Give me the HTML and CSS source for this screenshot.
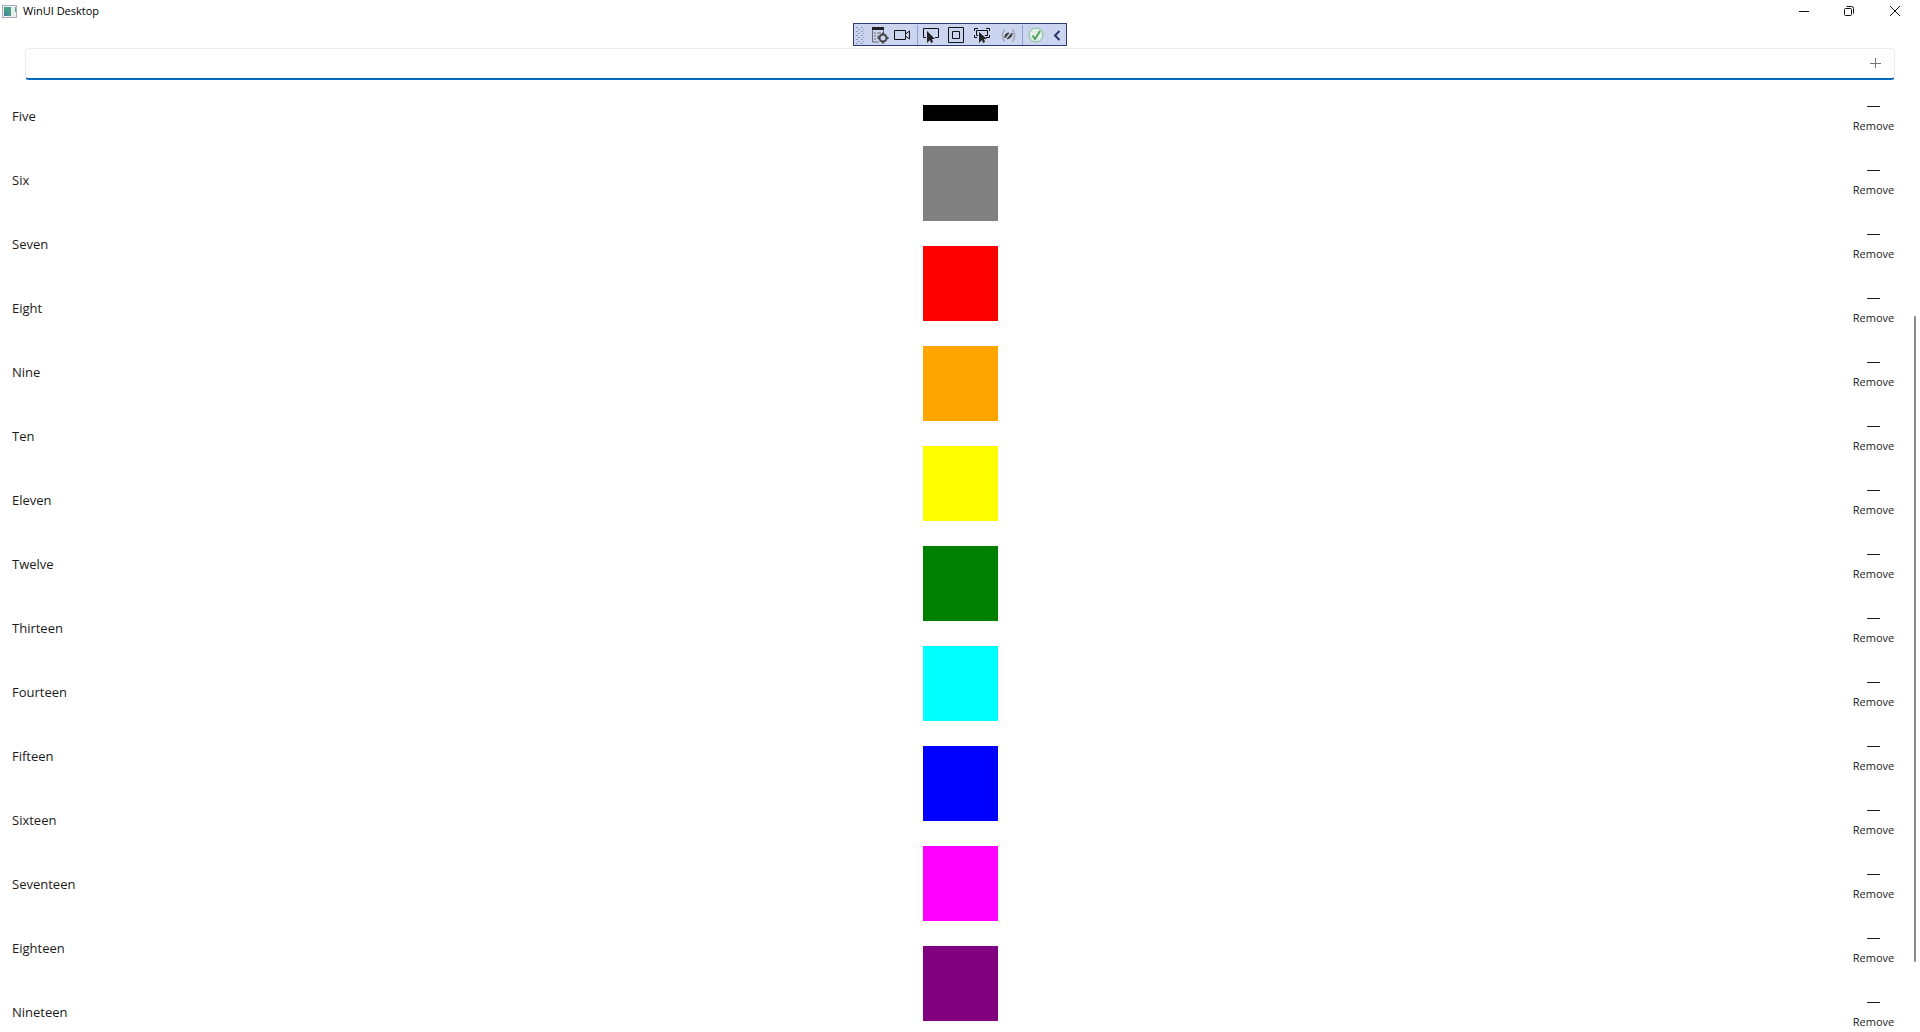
FILE: index.html
```html
<!DOCTYPE html>
<html lang="en">
<head>
<meta charset="utf-8">
<title>WinUI Desktop</title>
<link rel="stylesheet" href="styles.css">
</head>
<body>
<header class="titlebar">
  <svg class="app-icon" width="16" height="13" viewBox="0 0 16 13"><rect x=".5" y=".5" width="14" height="12" fill="#eef1f4" stroke="#a9abb6"/><rect x="2" y="2" width="7" height="9" fill="#4c9a88"/><path d="M2 11V6l4 5z" fill="#4a82a6"/><rect x="9" y="2" width="4" height="9" fill="#e4efec"/><path d="M13 2h1v5h-1z" fill="#5ba07c"/></svg>
  <h1 class="title">WinUI Desktop</h1>
  <div class="window-buttons">
    <button class="window-button" aria-label="Minimize"><svg width="12" height="12" viewBox="0 0 12 12"><path d="M2 6.5h10"/></svg></button>
    <button class="window-button" aria-label="Restore"><svg width="12" height="12" viewBox="0 0 12 12"><rect x="1.500" y="3.500" width="7" height="7" rx="1"/><path d="M3.500 1.500h5a2 2 0 0 1 2 2v5"/></svg></button>
    <button class="window-button" aria-label="Close"><svg width="12" height="12" viewBox="0 0 12 12"><path d="M1 1l10 10M11 1L1 11"/></svg></button>
  </div>
</header>

<div class="debug-bar" role="toolbar" aria-label="Debug tools">
  <svg class="grip" width="8" height="18" viewBox="0 0 8 18"><path d="M0 1.500h8M0 5.500h8M0 9.500h8M0 13.500h8M0 17.500h8" stroke-dasharray="2 3"/><path d="M2 3.500h6M2 7.500h6M2 11.500h6M2 15.500h6" stroke-dasharray="2 3"/></svg>
  <button class="tool tool-tree" aria-label="Live visual tree"><svg width="18" height="18" viewBox="0 0 18 18"><path d="M1 1h12v3H1z" fill="#222" stroke="none"/><path d="M1.500 4v12H8M12.500 4v3M3 7h2M6 7h4M3 10h2M6 10h2M3 13h2" stroke="#666"/><circle cx="12" cy="12" r="3.500" stroke="#444" stroke-width="2"/><path d="M12 6.500v2M12 15.500v2M6.500 12h2M15.500 12h2" stroke="#444" stroke-width="2"/></svg></button>
  <button class="tool tool-camera" aria-label="Camera"><svg width="18" height="18" viewBox="0 0 18 18"><path d="M1.500 4.500h11v9h-11zM12.500 8l4-3v8l-4-3"/></svg></button>
  <span class="divider"></span>
  <button class="tool tool-select" aria-label="Select element"><svg width="18" height="18" viewBox="0 0 18 18"><path d="M4 11.500H1.500v-9h15v9H13"/><path class="solid" d="M5 5v12l3-3 1 3 2-1-1-3h3z"/></svg></button>
  <button class="tool tool-adorners" aria-label="Layout adorners"><svg width="18" height="18" viewBox="0 0 18 18"><path d="M1.500 1.500h15v15h-15zM5.500 5.500h7v7h-7z"/></svg></button>
  <button class="tool tool-focus" aria-label="Track focus"><svg width="18" height="18" viewBox="0 0 18 18"><path d="M1.500 5V2.500H5M13 2.500h3.500V5M1.500 9v2.500H4M13 11.500h3.500V9M5 9.500H3.500v-5h11v5H12"/><path class="solid" d="M6 6v11l3-3 1 3 2-1-1-3h3z"/></svg></button>
  <button class="tool tool-binding" aria-label="Binding failures"><svg width="18" height="18" viewBox="0 0 18 18"><path d="M6 4C3 4 5 8 3 9.500 5 11 3 15 6 15M13 4c3 0 1 4 3 5.500-2 1.500 0 5.500-3 5.500" stroke="#888"/><path d="M6 10c0-2 2-3 4-3l-4 5zM13 8c0 3-2 4-5 5l5-6z" fill="#333" stroke="#444"/></svg></button>
  <span class="divider"></span>
  <button class="tool tool-reload" aria-label="Hot reload"><svg width="18" height="18" viewBox="0 0 18 18"><circle cx="9" cy="9" r="7" fill="#e3eeea" stroke="#7bbd86"/><path d="M5.500 9.500L8 13l5-8" stroke="#4ba656" stroke-width="2"/></svg></button>
  <button class="tool tool-collapse" aria-label="Collapse"><svg width="8" height="12" viewBox="0 0 8 12"><path d="M6.500 2L2 6.500 6.500 11" stroke="#28336b" stroke-width="2"/></svg></button>
</div>

<main class="page">
  <form class="entry">
    <input class="entry-input" type="text" aria-label="New item">
    <button class="entry-add" type="button" aria-label="Add"><svg width="12" height="12" viewBox="0 0 12 12"><path d="M6.500 0v10M1 5.500h11"/></svg></button>
  </form>
  <section class="content">
    <ul class="items">
      <li class="item"><span>Five</span><button class="remove"><i class="minus"></i>Remove</button></li>
      <li class="item"><span>Six</span><button class="remove"><i class="minus"></i>Remove</button></li>
      <li class="item"><span>Seven</span><button class="remove"><i class="minus"></i>Remove</button></li>
      <li class="item"><span>Eight</span><button class="remove"><i class="minus"></i>Remove</button></li>
      <li class="item"><span>Nine</span><button class="remove"><i class="minus"></i>Remove</button></li>
      <li class="item"><span>Ten</span><button class="remove"><i class="minus"></i>Remove</button></li>
      <li class="item"><span>Eleven</span><button class="remove"><i class="minus"></i>Remove</button></li>
      <li class="item"><span>Twelve</span><button class="remove"><i class="minus"></i>Remove</button></li>
      <li class="item"><span>Thirteen</span><button class="remove"><i class="minus"></i>Remove</button></li>
      <li class="item"><span>Fourteen</span><button class="remove"><i class="minus"></i>Remove</button></li>
      <li class="item"><span>Fifteen</span><button class="remove"><i class="minus"></i>Remove</button></li>
      <li class="item"><span>Sixteen</span><button class="remove"><i class="minus"></i>Remove</button></li>
      <li class="item"><span>Seventeen</span><button class="remove"><i class="minus"></i>Remove</button></li>
      <li class="item"><span>Eighteen</span><button class="remove"><i class="minus"></i>Remove</button></li>
      <li class="item"><span>Nineteen</span><button class="remove"><i class="minus"></i>Remove</button></li>
    </ul>
    <div class="swatches">
      <div class="swatch black"></div>
      <div class="swatch gray"></div>
      <div class="swatch red"></div>
      <div class="swatch orange"></div>
      <div class="swatch yellow"></div>
      <div class="swatch green"></div>
      <div class="swatch cyan"></div>
      <div class="swatch blue"></div>
      <div class="swatch magenta"></div>
      <div class="swatch purple"></div>
    </div>
    <div class="scrollbar"></div>
  </section>
</main>
</body>
</html>
```
FILE: styles.css
```css
* { box-sizing: border-box; }

body {
  margin: 0;
  background: #fff;
  color: #1b1b1b;
  font: 13px/20px "Open Sans", "Noto Sans", sans-serif;
}

button {
  display: flex;
  align-items: center;
  justify-content: center;
  padding: 0;
  border: 0;
  background: none;
  color: inherit;
  font: inherit;
}

svg {
  display: block;
  fill: none;
  stroke: #111;
}

/* Title bar */
.titlebar {
  display: flex;
  align-items: center;
  height: 22px;
  padding-left: 2px;
}

.app-icon { stroke: none; }

.title {
  margin: 0 auto 0 5px;
  color: #000;
  font-size: 11px;
  font-weight: 400;
}

.window-buttons { display: flex; }

.window-button {
  width: 46px;
  height: 20px;
}

.window-button:last-child { margin-right: 2px; }

/* Debug toolbar floating above the page */
.debug-bar {
  position: absolute;
  top: 23px;
  left: 50%;
  display: flex;
  align-items: center;
  width: 214px;
  height: 23px;
  padding-left: 2px;
  border: 1px solid #2d3c78;
  background: #ccd5f0;
  transform: translateX(-50%);
}

.grip { stroke: #8490b8; }
.tool { width: 26px; height: 20px; }
.tool-tree { width: 24px; margin-left: 4px; }
.tool-binding { width: 28px; }
.tool-collapse { width: 18px; }

.divider {
  width: 1px;
  height: 20px;
  background: #8ea2d0;
}

.tool-camera { justify-content: flex-start; padding-left: 2px; width: 26px; }

.solid { fill: #222; stroke: none; }

/* Entry box */
.page { padding-top: 26px; }

.entry {
  display: flex;
  align-items: center;
  height: 32px;
  margin: 0 25px;
  border: 1px solid #ececec;
  border-bottom: 2px solid #0067c0;
  border-radius: 4px;
}

.entry-input {
  flex: 1;
  min-width: 0;
  height: 28px;
  border: 0;
  outline: 0;
  background: none;
  font: inherit;
}

.entry-add { width: 38px; height: 28px; }
.entry-add svg { stroke: #777; }

/* List, swatches and scroll indicator share one area */
.content {
  display: grid;
  margin-top: 4px;
}

.items,
.swatches,
.scrollbar { grid-area: 1 / 1; }

.items {
  margin: 0;
  padding: 0;
  list-style: none;
}

.item {
  display: flex;
  align-items: center;
  justify-content: space-between;
  height: 64px;
  padding: 0 12px;
}

.remove {
  flex-direction: column;
  gap: 11px;
  width: 69px;
  padding-top: 7px;
  font-size: 11px;
  line-height: 16px;
}

.minus {
  width: 13px;
  height: 1px;
  background: #1b1b1b;
}

.swatches {
  display: flex;
  flex-direction: column;
  gap: 25px;
  justify-self: center;
  padding-top: 21px;
}

.swatch { width: 75px; height: 75px; }
.black { height: 16px; background: #000; }
.gray { background: #808080; }
.red { background: #f00; }
.orange { background: #ffa500; }
.yellow { background: #ff0; }
.green { background: #008000; }
.cyan { background: #0ff; }
.blue { background: #00f; }
.magenta { background: #f0f; }
.purple { background: #800080; }

.scrollbar {
  justify-self: end;
  width: 2px;
  height: 646px;
  margin: 232px 4px 0 0;
  border-radius: 1px;
  background: #8b8b8b;
}
```
